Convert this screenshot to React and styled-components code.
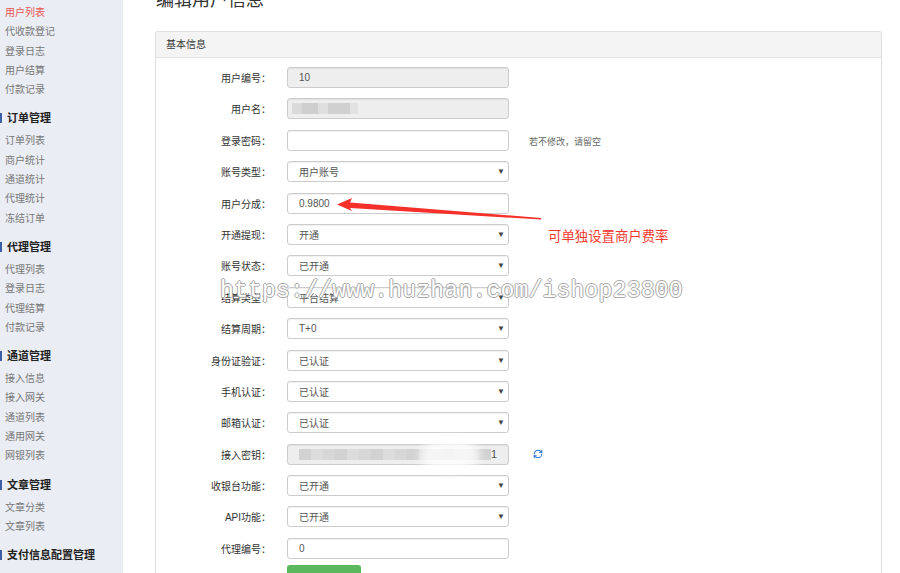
import React from "react"
import styled, { createGlobalStyle } from "styled-components"
import { RefreshCw } from "lucide-react"

const Global = createGlobalStyle`
  html, body {
    margin: 0;
    padding: 0;
    background: #fff;
    font-family: "Liberation Sans", "Noto Sans CJK SC", sans-serif;
    overflow: hidden;
  }
`

const Page = styled.div`
  position: relative;
  display: flex;
  width: 900px;
  height: 573px;
  overflow: hidden;
`

const Sidebar = styled.nav`
  width: 123px;
  flex-shrink: 0;
  background: #eaedf4;
  padding-top: 3px;
`

const Group = styled.div`
  margin-top: ${(p) => (p.first ? 0 : "6px")};
`

const GroupTitle = styled.div`
  position: relative;
  height: 26px;
  line-height: 26px;
  padding-left: 7px;
  font-size: 11px;
  font-weight: bold;
  color: #222;
  &:before {
    content: "";
    position: absolute;
    left: 0;
    top: 8px;
    width: 2px;
    height: 10px;
    background: #3c5ea6;
  }
`

const NavItem = styled.div`
  height: 19.3px;
  line-height: 19.3px;
  padding-left: 5px;
  font-size: 10px;
  color: ${(p) => (p.active ? "#e8554e" : "#777")};
`

const Main = styled.main`
  flex: 1;
  padding: 0 18px 0 32px;
`

const Title = styled.h1`
  margin: -10px 0 0 1px;
  height: 28px;
  line-height: 20px;
  font-size: 18px;
  font-weight: normal;
  color: #333;
`

const Panel = styled.section`
  margin-top: 13px;
  border: 1px solid #ddd;
  border-bottom: none;
  border-radius: 3px 3px 0 0;
  height: 560px;
`

const PanelHeader = styled.div`
  height: 25px;
  line-height: 25px;
  padding-left: 10px;
  background: #f4f4f4;
  border-bottom: 1px solid #e4e4e4;
  font-size: 10px;
  color: #333;
`

const Form = styled.div`
  display: flex;
  flex-direction: column;
  gap: 10.4px;
  padding-top: 9px;
`

const Row = styled.div`
  display: grid;
  grid-template-columns: 115px 222px auto;
  column-gap: 16px;
  align-items: center;
  height: 21px;
`

const Label = styled.div`
  text-align: right;
  font-size: 10px;
  color: #333;
  white-space: nowrap;
`

const Field = styled.div`
  display: flex;
  align-items: center;
  box-sizing: border-box;
  height: 21px;
  padding: 0 3px 0 11px;
  border: 1px solid #ccc;
  border-radius: 3px;
  background: ${(p) => (p.disabled ? "#eee" : "#fff")};
  box-shadow: inset 0 1px 1px rgba(0, 0, 0, 0.06);
  font-size: 10px;
  color: #555;
  overflow: hidden;
`

const Caret = styled.span`
  margin-left: auto;
  font-size: 8px;
  color: #444;
`

const Hint = styled.span`
  margin-left: 4px;
  font-size: 9px;
  color: #666;
`

const BlurStrip = styled.span`
  display: flex;
  margin-left: ${(p) => (p.inset ? "-7px" : "0")};
  filter: blur(0.6px);
`

const Blur = styled.span`
  width: ${(p) => p.w}px;
  height: 11px;
  background: ${(p) => p.shade};
`

const KeyEnd = styled.span`
  margin: 0 10px 0 auto;
  font-size: 11px;
  color: #555;
`

const Smear = styled.span`
  position: absolute;
  left: 420px;
  top: 437px;
  width: 60px;
  height: 36px;
  border-radius: 50%;
  background: rgba(255, 255, 255, 0.75);
  filter: blur(4px);
`

const Refresh = styled(RefreshCw)`
  margin-left: 8px;
  color: #2f7bd6;
`

const SaveButton = styled.div`
  margin: -4px 0 0 131px;
  width: 74px;
  height: 20px;
  background: #5cb85c;
  border-radius: 3px;
`

const Watermark = styled.div`
  position: absolute;
  left: 220px;
  top: 276px;
  font-family: "Liberation Mono", monospace;
  font-size: 23px;
  line-height: 30px;
  letter-spacing: 0.22px;
  color: #fff;
  text-shadow: 1px 0 #a8a8a8, -1px 0 #a8a8a8, 0 1px #a8a8a8, 0 -1px #a8a8a8;
  white-space: nowrap;
`

const Note = styled.div`
  position: absolute;
  left: 548px;
  top: 226px;
  font-size: 13.4px;
  line-height: 18px;
  color: #f23a2f;
  font-family: "Noto Sans CJK SC", sans-serif;
`

const ArrowSvg = styled.svg`
  position: absolute;
  left: 0;
  top: 0;
  pointer-events: none;
`

const menu = [
  { items: ["用户列表", "代收款登记", "登录日志", "用户结算", "付款记录"] },
  { title: "订单管理", items: ["订单列表", "商户统计", "通道统计", "代理统计", "冻结订单"] },
  { title: "代理管理", items: ["代理列表", "登录日志", "代理结算", "付款记录"] },
  { title: "通道管理", items: ["接入信息", "接入网关", "通道列表", "通用网关", "网银列表"] },
  { title: "文章管理", items: ["文章分类", "文章列表"] },
  { title: "支付信息配置管理", items: [] },
]

const fields = [
  { label: "用户编号：", value: "10", disabled: true },
  { label: "用户名：", disabled: true, blurred: "name" },
  { label: "登录密码：", value: "", hint: "若不修改，请留空" },
  { label: "账号类型：", value: "用户账号", select: true },
  { label: "用户分成：", value: "0.9800" },
  { label: "开通提现：", value: "开通", select: true },
  { label: "账号状态：", value: "已开通", select: true },
  { label: "结算类型：", value: "平台结算", select: true },
  { label: "结算周期：", value: "T+0", select: true },
  { label: "身份证验证：", value: "已认证", select: true },
  { label: "手机认证：", value: "已认证", select: true },
  { label: "邮箱认证：", value: "已认证", select: true },
  { label: "接入密钥：", disabled: true, blurred: "key", refresh: true },
  { label: "收银台功能：", value: "已开通", select: true },
  { label: "API功能：", value: "已开通", select: true },
  { label: "代理编号：", value: "0" },
]

const nameShades = [
  [10, "#dadada"],
  [16, "#cfcfcf"],
  [10, "#dedede"],
  [22, "#d0d0d0"],
  [8, "#e2e2e2"],
]

const keyShades = Array.from({ length: 16 }, (_, i) => [
  12,
  ["#d2d2d2", "#dcdcdc", "#d7d7d7"][i % 3],
])

const Pixelated = ({ shades, inset }) => (
  <BlurStrip inset={inset}>
    {shades.map(([w, c], i) => (
      <Blur key={i} w={w} shade={c} />
    ))}
  </BlurStrip>
)

export default function App() {
  return (
    <Page>
      <Global />
      <Sidebar>
        {menu.map((g, gi) => (
          <Group key={gi} first={gi === 0}>
            {g.title && <GroupTitle>{g.title}</GroupTitle>}
            {g.items.map((it, ii) => (
              <NavItem key={it + ii} active={gi === 0 && ii === 0}>
                {it}
              </NavItem>
            ))}
          </Group>
        ))}
      </Sidebar>
      <Main>
        <Title>编辑用户信息</Title>
        <Panel>
          <PanelHeader>基本信息</PanelHeader>
          <Form>
            {fields.map((f) => (
              <Row key={f.label}>
                <Label>{f.label}</Label>
                <Field disabled={f.disabled}>
                  {f.value && <span>{f.value}</span>}
                  {f.blurred === "name" && <Pixelated shades={nameShades} inset />}
                  {f.blurred === "key" && (
                    <>
                      <Pixelated shades={keyShades} />
                      <KeyEnd>1</KeyEnd>
                    </>
                  )}
                  {f.select && <Caret>▼</Caret>}
                </Field>
                <div>
                  {f.hint && <Hint>{f.hint}</Hint>}
                  {f.refresh && <Refresh size={10} strokeWidth={2.6} />}
                </div>
              </Row>
            ))}
            <SaveButton />
          </Form>
        </Panel>
      </Main>
      <Smear />
      <ArrowSvg width="900" height="573" viewBox="0 0 900 573">
        <polygon
          points="337,204.5 352,198 350,202.5 541,218 541,219.5 350,208 352,211"
          fill="#f5302a"
        />
      </ArrowSvg>
      <Note>可单独设置商户费率</Note>
      <Watermark>https://www.huzhan.com/ishop23800</Watermark>
    </Page>
  )
}
